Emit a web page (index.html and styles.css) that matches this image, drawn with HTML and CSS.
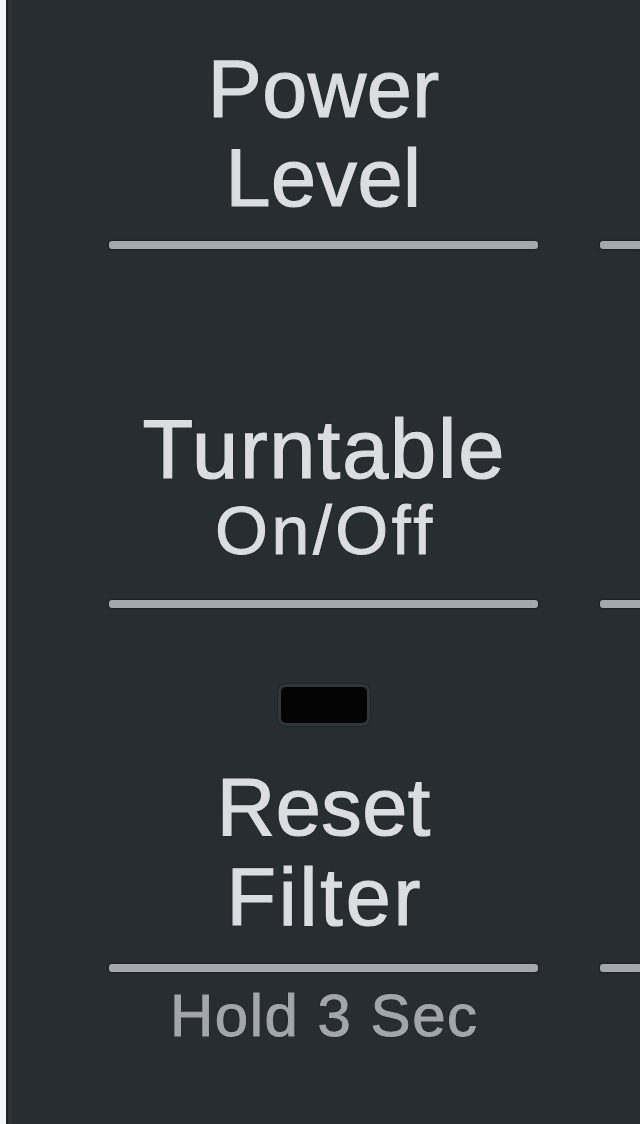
FILE: index.html
```html
<!DOCTYPE html>
<html lang="en">
<head>
  <meta charset="UTF-8" />
  <title>Control Panel</title>
  <meta name="viewport" content="width=device-width, initial-scale=1.0" />
  <link rel="stylesheet" href="styles.css">
</head>
<body>

  <div class="panel">
    <!-- row 1 -->
    <div class="key key-power">
      <div class="label">Power<br>Level</div>
      <div class="rule"></div>
    </div>
    <div class="key blank"><div class="rule"></div></div>

    <!-- row 2 -->
    <div class="key key-turntable">
      <div class="label label-wide">Turntable</div>
      <div class="sub">On/Off</div>
      <div class="rule"></div>
    </div>
    <div class="key blank"><div class="rule"></div></div>

    <!-- row 3 -->
    <div class="key key-filter">
      <div class="indicator"></div>
      <div class="label label-filter">Reset<br><span class="spread">Filter</span></div>
      <div class="rule"></div>
    </div>
    <div class="key blank"><div class="rule"></div></div>

    <!-- row 4 -->
    <div class="key key-note">
      <div class="note">Hold 3 Sec</div>
    </div>
    <div class="key blank"></div>
  </div>

</body>
</html>
```

FILE: styles.css
```css
html, body {
  margin: 0;
  padding: 0;
  height: 100%;
  overflow: hidden;
  background: #f3f5f6;
}

body {
  padding-left: 6px;
  font-family: 'Liberation Sans', Arial, sans-serif;
}

.panel {
  height: 100%;
  box-sizing: border-box;
  display: grid;
  grid-template-columns: 491px 1fr;
  grid-template-rows: auto auto auto 1fr;
  align-content: start;
  padding-left: 70px;
  background: #282d31;
  border-left: 2px solid #1f2427;
  box-shadow: inset 4px 0 0 #2d3336;
}

.key {
  display: flex;
  flex-direction: column;
  align-items: center;
  min-width: 0;
}

.label {
  font-size: 81px;
  line-height: 89px;
  letter-spacing: 0.5px;
  text-indent: 0.5px;
  text-align: center;
  color: #dcdde0;
  -webkit-text-stroke: 1.2px #dcdde0;
  text-shadow: 0 0 2px rgba(0, 0, 0, 0.7);
}

.label-wide {
  font-size: 83px;
  line-height: 87px;
  letter-spacing: 1.8px;
  text-indent: 1.8px;
}

.label-filter {
  line-height: 90px;
}

.spread {
  letter-spacing: 2.8px;
  padding-left: 2.8px;
}

.sub {
  font-size: 68px;
  line-height: 74px;
  letter-spacing: 3.6px;
  text-indent: 3.6px;
  color: #dcdde0;
  -webkit-text-stroke: 1px #dcdde0;
  text-shadow: 0 0 2px rgba(0, 0, 0, 0.7);
}

.note {
  font-size: 60px;
  line-height: 60px;
  letter-spacing: 1.5px;
  text-indent: 1.5px;
  color: #a2a6aa;
  -webkit-text-stroke: 1px #a2a6aa;
  text-shadow: 0 0 2px rgba(0, 0, 0, 0.6);
}

/* the printed divider under each key */
.rule {
  align-self: stretch;
  height: 8px;
  margin: 0 31px;
  border-radius: 3px;
  background: #a4a8ac;
  box-shadow: 0 0 3px rgba(0, 0, 0, 0.6);
}

.blank .rule {
  margin-top: auto;
  margin-right: 0;
  border-radius: 3px 0 0 3px;
}

.key-power {
  padding-top: 45px;
}
.key-power .rule {
  margin-top: 18px;
}

.key-turntable {
  padding-top: 157px;
}
.key-turntable .rule {
  margin-top: 33px;
}

/* black window of the filter LED */
.indicator {
  width: 86px;
  height: 36px;
  margin-top: 79px;
  margin-bottom: 39px;
  border-radius: 5px;
  background: #040404;
  box-shadow: 0 0 0 3px #30363a, 0 0 0 4px #1f2427;
}

.key-filter .rule {
  margin-top: 22px;
}

.key-note {
  padding-top: 14px;
}
```
